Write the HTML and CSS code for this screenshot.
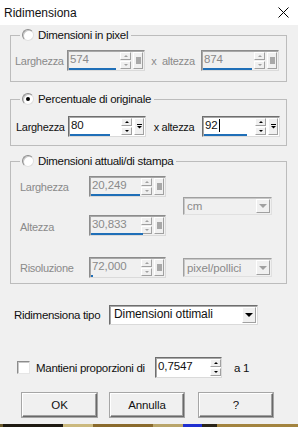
FILE: index.html
```html
<!DOCTYPE html>
<html lang="it">
<head>
    <meta charset="UTF-8">
    <meta name="viewport" content="width=device-width, initial-scale=1.0">
    <title>Ridimensiona</title>
    <link rel="stylesheet" href="styles.css">
</head>
<body>
    <!-- barra del titolo -->
    <div class="titlebar">
        <span class="title">Ridimensiona</span>
        <svg class="close" viewBox="0 0 11 11"><path d="M0.5 0.5 L10.5 10.5 M10.5 0.5 L0.5 10.5" stroke="#000" stroke-width="1"/></svg>
    </div>

    <div class="dialog">
        <!-- dimensioni in pixel -->
        <fieldset class="group group-pixel off">
            <legend><span class="radio"></span>Dimensioni in pixel</legend>
            <div class="row">
                <span class="lbl">Larghezza</span>
                <div class="spin-field">
                    <div class="value">574<i class="bar" style="width:47px"></i></div>
                    <div class="spin"><span class="up"></span><span class="down"></span></div>
                    <div class="unit-btn"><span class="sq"></span></div>
                </div>
                <span class="sep">x&nbsp;&nbsp;altezza</span>
                <div class="spin-field">
                    <div class="value">874<i class="bar" style="width:49px"></i></div>
                    <div class="spin"><span class="up"></span><span class="down"></span></div>
                    <div class="unit-btn"><span class="sq"></span></div>
                </div>
            </div>
        </fieldset>

        <!-- percentuale -->
        <fieldset class="group group-perc">
            <legend><span class="radio checked"></span>Percentuale di originale</legend>
            <div class="row">
                <span class="lbl">Larghezza</span>
                <div class="spin-field">
                    <div class="value">80<i class="bar" style="width:40px"></i></div>
                    <div class="spin"><span class="up"></span><span class="down"></span></div>
                    <div class="unit-btn"><svg viewBox="0 0 7 7"><path d="M1 1.5 H6" stroke="#000"/><path d="M1 3 H6 L3.5 5.5 Z" fill="#000"/></svg></div>
                </div>
                <span class="sep">x altezza</span>
                <div class="spin-field">
                    <div class="value">92<b class="caret"></b><i class="bar" style="width:43px"></i></div>
                    <div class="spin"><span class="up"></span><span class="down"></span></div>
                    <div class="unit-btn"><svg viewBox="0 0 7 7"><path d="M1 1.5 H6" stroke="#000"/><path d="M1 3 H6 L3.5 5.5 Z" fill="#000"/></svg></div>
                </div>
            </div>
        </fieldset>

        <!-- dimensioni di stampa -->
        <fieldset class="group group-print off">
            <legend><span class="radio"></span>Dimensioni attuali/di stampa</legend>
            <div class="print-grid">
                <span class="lbl r1">Larghezza</span>
                <div class="spin-field r1">
                    <div class="value">20,249<i class="bar" style="width:49px"></i></div>
                    <div class="spin"><span class="up"></span><span class="down"></span></div>
                    <div class="unit-btn"><span class="sq"></span></div>
                </div>
                <div class="combo combo-cm"><span class="combo-text">cm</span><span class="combo-btn"></span></div>

                <span class="lbl r2">Altezza</span>
                <div class="spin-field r2">
                    <div class="value">30,833<i class="bar" style="width:52px"></i></div>
                    <div class="spin"><span class="up"></span><span class="down"></span></div>
                    <div class="unit-btn"><span class="sq"></span></div>
                </div>

                <span class="lbl r3">Risoluzione</span>
                <div class="spin-field r3">
                    <div class="value">72,000<i class="bar" style="width:2px"></i></div>
                    <div class="spin"><span class="up"></span><span class="down"></span></div>
                    <div class="unit-btn"><span class="sq"></span></div>
                </div>
                <div class="combo combo-res r3"><span class="combo-text">pixel/pollici</span><span class="combo-btn"></span></div>
            </div>
        </fieldset>

        <!-- tipo -->
        <div class="type-row">
            <span class="type-lbl">Ridimensiona tipo</span>
            <div class="combo combo-type"><span class="combo-text">Dimensioni ottimali</span><span class="combo-btn"></span></div>
        </div>

        <!-- proporzioni -->
        <div class="ratio-row">
            <span class="check"></span>
            <span class="ratio-lbl">Mantieni proporzioni di</span>
            <div class="spin-field ratio-field">
                <div class="value">0,7547</div>
                <div class="spin"><span class="up"></span><span class="down"></span></div>
            </div>
            <span class="ratio-end">a 1</span>
        </div>

        <!-- pulsanti -->
        <div class="buttons">
            <button class="btn btn-ok">OK</button>
            <button class="btn btn-cancel">Annulla</button>
            <button class="btn btn-help">?</button>
        </div>
    </div>

    <div class="desktop-strip"></div>
</body>
</html>
```

FILE: styles.css
```css
* {
    margin: 0;
    padding: 0;
    box-sizing: border-box;
}

body {
    width: 298px;
    height: 427px;
    overflow: hidden;
    background: #f0f0f0;
    color: #111;
    font-family: "Liberation Sans", Arial, sans-serif;
    font-size: 11px;
    letter-spacing: -0.3px;
}

/* barra del titolo */
.titlebar {
    height: 25px;
    background: #fff;
    display: flex;
    align-items: center;
    justify-content: space-between;
    padding: 0 9px 0 4px;
}

.title {
    font-size: 12px;
    letter-spacing: 0;
}

.close {
    width: 11px;
    height: 11px;
}

.dialog {
    height: 399px;
    padding: 3px 11px 0 10px;
}

/* gruppi */
.group {
    width: 277px;
    border: 1px solid #bcbcbc;
}

.group legend {
    display: flex;
    align-items: center;
    gap: 4px;
    height: 14px;
    line-height: 14px;
    margin-left: 9px;
    padding: 0 3px 0 2px;
    font-size: 11.5px;
}

.group-pixel {
    padding-bottom: 10px;
}

.group-perc {
    margin-top: 10px;
    padding-bottom: 8px;
}

.group-print {
    margin-top: 8px;
    padding-bottom: 5px;
}

.off .lbl,
.off .sep,
.off .value,
.off .combo-text {
    color: #8a8a8a;
}

.row {
    display: flex;
    align-items: center;
    margin-top: 8px;
    padding-left: 4px;
}

.group-perc .row {
    margin-top: 10px;
    padding-left: 5px;
}

.row > *,
.ratio-row > *,
.type-row > * {
    flex-shrink: 0;
}

.lbl {
    width: 52px;
}

.sep {
    width: 56px;
    text-align: center;
}

/* radio e check */
.radio {
    width: 12px;
    height: 12px;
    border-radius: 50%;
    background: #fff;
    border: 1px solid;
    border-color: #8c8c8c #e0e0e0 #e0e0e0 #8c8c8c;
    box-shadow: inset 1px 1px 0 #c8c8c8;
    display: flex;
    align-items: center;
    justify-content: center;
}

.radio.checked::after {
    content: "";
    width: 4px;
    height: 4px;
    border-radius: 50%;
    background: #000;
}

.check {
    width: 13px;
    height: 13px;
    background: #fff;
    border: 1px solid;
    border-color: #8c8c8c #e6e6e6 #e6e6e6 #8c8c8c;
    box-shadow: inset 1px 1px 0 #c8c8c8;
}

/* campi numerici */
.spin-field {
    width: 78px;
    height: 21px;
    display: flex;
    background: #fff;
    border: 1px solid;
    border-color: #6e6e6e #dadada #dadada #6e6e6e;
    box-shadow: inset 1px 1px 0 #a8a8a8;
}

.off .spin-field {
    background: #f0f0f0;
    border-color: #8c8c8c #dadada #dadada #8c8c8c;
}

.value {
    position: relative;
    flex: 1;
    display: flex;
    align-items: center;
    padding: 0 0 3px 2px;
    font-size: 11.5px;
    letter-spacing: -0.1px;
}

.bar {
    position: absolute;
    left: 1px;
    bottom: 0;
    height: 2px;
    background: #1f6fb8;
}

.caret {
    width: 1px;
    height: 13px;
    background: #000;
    margin-left: 1px;
}

.spin {
    width: 11px;
    display: flex;
    flex-direction: column;
    gap: 1px;
    padding: 1px 0;
}

.spin span {
    flex: 1;
    display: flex;
    align-items: center;
    justify-content: center;
    background: #f0f0f0;
    border: 1px solid;
    border-color: #fff #a0a0a0 #a0a0a0 #fff;
    color: #000;
}

.off .spin span {
    color: #a0a0a0;
}

.spin .up::after {
    content: "";
    border-left: 2px solid transparent;
    border-right: 2px solid transparent;
    border-bottom: 2px solid currentColor;
}

.spin .down::after {
    content: "";
    border-left: 2px solid transparent;
    border-right: 2px solid transparent;
    border-top: 2px solid currentColor;
}

.unit-btn {
    width: 10px;
    margin: 1px 1px 1px 2px;
    display: flex;
    align-items: center;
    justify-content: center;
    background: #f0f0f0;
    border: 1px solid;
    border-color: #fff #a0a0a0 #a0a0a0 #fff;
}

.unit-btn svg {
    width: 7px;
    height: 7px;
}

.sq {
    width: 5px;
    height: 7px;
    background: #a8a8a8;
}

/* griglia stampa */
.print-grid {
    display: grid;
    grid-template-columns: 69px 77px 17px 89px;
    grid-template-rows: 21px 21px 24px;
    row-gap: 18px;
    margin-top: 8px;
    padding-left: 9px;
}

.print-grid .lbl {
    width: auto;
    display: flex;
    align-items: center;
    grid-column: 1;
}

.print-grid .spin-field {
    width: 77px;
    grid-column: 2;
}

.print-grid .r1 {
    grid-row: 1;
}

.print-grid .r2 {
    grid-row: 2;
    padding-top: 2px;
}

.print-grid .spin-field.r2 {
    padding-top: 0;
}

.print-grid .r3 {
    grid-row: 3;
    align-self: end;
    height: 21px;
}

.combo-cm {
    grid-column: 4;
    grid-row: 1 / 3;
    align-self: center;
}

.print-grid .combo-res {
    grid-column: 4;
    height: 19px;
    margin-bottom: 1px;
}

/* tendine */
.combo {
    height: 18px;
    display: flex;
    align-items: center;
    background: #f0f0f0;
    border: 1px solid;
    border-color: #a0a0a0 #e0e0e0 #e0e0e0 #a0a0a0;
    box-shadow: inset 1px 1px 0 #c8c8c8;
    padding: 1px;
}

.combo-text {
    flex: 1;
    padding-left: 2px;
    font-size: 11.5px;
    letter-spacing: -0.1px;
}

.combo-btn {
    width: 14px;
    height: 100%;
    display: flex;
    align-items: center;
    justify-content: center;
    background: #f0f0f0;
    border: 1px solid;
    border-color: #fff #a0a0a0 #a0a0a0 #fff;
    color: #a0a0a0;
}

.combo-btn::after {
    content: "";
    border-left: 4px solid transparent;
    border-right: 4px solid transparent;
    border-top: 4px solid currentColor;
}

.type-row {
    display: flex;
    align-items: center;
    margin-top: 21px;
    padding-left: 4px;
}

.type-lbl {
    width: 95px;
    font-size: 11.5px;
}

.combo-type {
    width: 149px;
    height: 20px;
    background: #fff;
    border-color: #6e6e6e #dadada #dadada #6e6e6e;
    box-shadow: inset 1px 1px 0 #a8a8a8;
    padding: 1px 1px 1px 2px;
}

.combo-type .combo-text {
    font-size: 12px;
    padding-bottom: 2px;
}

.combo-type .combo-btn {
    color: #000;
}

/* proporzioni */
.ratio-row {
    display: flex;
    align-items: center;
    margin-top: 32px;
    padding-left: 7px;
}

.ratio-lbl {
    width: 125px;
    padding-left: 6px;
    font-size: 11.5px;
}

.ratio-field {
    width: 67px;
}

.ratio-end {
    margin-left: 12px;
    font-size: 11.5px;
}

/* pulsanti */
.buttons {
    display: flex;
    margin-top: 15px;
    padding-left: 12px;
}

.btn {
    height: 24px;
    background: #f0f0f0;
    border: 1px solid;
    border-color: #fff #696969 #696969 #fff;
    box-shadow: inset -1px -1px 0 #a0a0a0, 0 0 0 1px #a6a6a6;
    font-family: inherit;
    font-size: 11.5px;
    letter-spacing: -0.1px;
    color: #111;
}

.btn-ok {
    width: 75px;
}

.btn-cancel {
    width: 74px;
    margin-left: 13px;
}

.btn-help {
    width: 74px;
    margin-left: 15px;
}

/* sfondo del desktop sotto la finestra */
.desktop-strip {
    height: 3px;
    background: linear-gradient(to right,
        #6b5a2c 0, #6b5a2c 3px,
        #1e1a12 3px, #1e1a12 63px,
        #cbb97e 63px, #cbb97e 93px,
        #8a6a2c 93px, #8a6a2c 153px,
        #b9a56a 153px, #b9a56a 183px,
        #1f2fd0 183px, #1f2fd0 202px,
        #2a2418 202px, #2a2418 217px,
        #a3843f 217px);
}
```
